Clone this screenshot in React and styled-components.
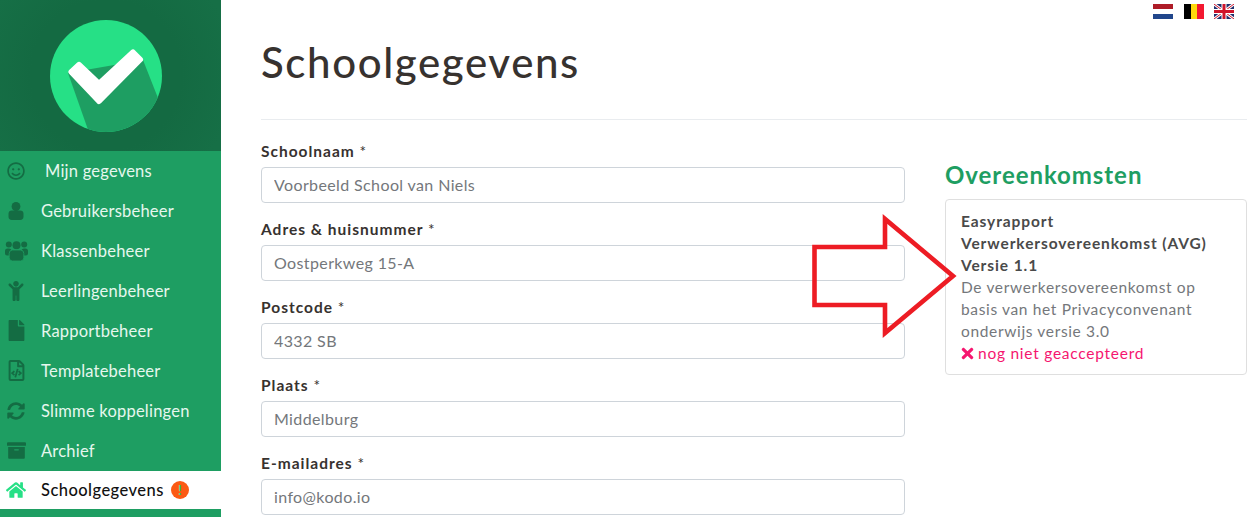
import React from 'react'
import styled, { createGlobalStyle } from 'styled-components'
import { FaRegSmile, FaChild, FaFile, FaRegFileCode, FaSyncAlt, FaArchive, FaHome, FaTimes } from 'react-icons/fa'

const Global = createGlobalStyle`
html, body {
  margin: 0;
  height: 517px;
  overflow: hidden;
  background: #fff;
  font-family: 'Lato', sans-serif;
  color: #37322f;
}
* { box-sizing: border-box; }
`

const Page = styled.div`
display: grid;
grid-template-columns: 221px 1fr;
height: 517px;
overflow: hidden;
`

const Sidebar = styled.nav`
background: #1e9e62;
height: 517px;
`

const LogoZone = styled.div`
height: 151px;
display: flex;
align-items: center;
padding-left: 50px;
background: radial-gradient(circle at 106px 75px, #146a42 0, #146a42 75px, #166f46 130px);
`

const Item = styled.a`
display: flex;
align-items: center;
height: ${p => p.$active ? '38px' : '40px'};
padding-bottom: 1px;
background: ${p => p.$active ? '#fff' : 'transparent'};
color: ${p => p.$active ? '#111' : '#e6f7ee'};
font-size: 16.5px;
letter-spacing: ${p => p.$active ? '0.45px' : '0.22px'};
font-weight: ${p => p.$active ? 500 : 400};
`

const IconBox = styled.span`
width: ${p => p.$wide ? '45px' : '41px'};
flex: none;
display: flex;
align-items: center;
justify-content: center;
padding-right: ${p => p.$wide ? '15px' : '11px'};
margin-left: 1px;
margin-right: -1px;
color: ${p => p.$active ? '#26e086' : '#146c43'};
`

const Badge = styled.span`
width: 18px;
height: 18px;
margin-left: 7px;
border-radius: 50%;
background: #fb5a14;
color: #26e086;
font-size: 13px;
font-weight: 700;
line-height: 18px;
text-align: center;
letter-spacing: 0;
`

const Main = styled.main`
position: relative;
padding: 0 2px 0 40px;
min-width: 0;
`

const Flags = styled.div`
position: absolute;
top: 4px;
right: 15px;
display: flex;
gap: 10px;
`

const Flag = styled.svg`
display: block;
margin-right: ${p => p.$extra || 0}px;
`

const Title = styled.h1`
margin: 0;
height: 120px;
padding-top: 35px;
border-bottom: 1px solid #e9ecef;
font-size: 42px;
line-height: 54px;
font-weight: 500;
letter-spacing: 1.6px;
color: #37322f;
`

const Columns = styled.div`
display: grid;
grid-template-columns: 644px 302px;
column-gap: 40px;
padding-top: 19px;
`

const Field = styled.div`
height: 78px;
`

const Label = styled.label`
display: block;
height: 28px;
line-height: 24px;
font-size: 15.5px;
font-weight: 700;
letter-spacing: 1px;
color: #37322f;
`

const Star = styled.span`
font-weight: 400;
`

const Input = styled.input`
display: block;
width: 100%;
height: 36px;
padding: 0 13px 2px 12px;
border: 1px solid #ced4da;
border-radius: 4px;
background: #fff;
font: inherit;
font-size: 16px;
letter-spacing: 0.38px;
color: #74777b;
outline: none;
`

const Aside = styled.aside`
padding-top: 21px;
`

const Heading = styled.h2`
margin: 0 0 10px;
height: 29px;
line-height: 29px;
font-size: 24px;
font-weight: 700;
letter-spacing: 0.95px;
color: #1e9e62;
`

const Card = styled.div`
height: 176px;
padding: 10px 15px;
border: 1px solid #dfdfdf;
border-radius: 4px;
font-size: 15.5px;
line-height: 22px;
letter-spacing: 0.65px;
color: #74777b;
`

const CardTitle = styled.div`
font-weight: 700;
letter-spacing: 0.9px;
color: #4a4a4a;
`

const Status = styled.div`
display: flex;
align-items: center;
gap: 2px;
letter-spacing: 0.75px;
color: #f5166f;
svg { margin-left: -2px; }
`

const ArrowOverlay = styled.svg`
position: absolute;
left: 0;
top: 0;
pointer-events: none;
`

function Logo() {
  return (
    <svg width="112" height="112" viewBox="50 19 112 112">
      <defs>
        <clipPath id="disc"><circle cx="106" cy="75" r="56" /></clipPath>
      </defs>
      <circle cx="106" cy="75" r="56" fill="#26e086" />
      <polygon clipPath="url(#disc)" points="68,72 143,59 165,115 150,140 92,140" fill="#1e9e62" />
      <polygon points="71.5,71 79,64 99,83 133,51.5 140,58.5 99,100" fill="#fff" stroke="#fff" strokeWidth="6" strokeLinejoin="round" />
    </svg>
  )
}

function UserIcon() {
  return (
    <svg width="16" height="18" viewBox="0 0 16 18" fill="currentColor">
      <ellipse cx="8" cy="4.6" rx="4.4" ry="4.6" />
      <rect x="0.5" y="8.5" width="15" height="9.5" rx="3.4" />
    </svg>
  )
}

function UsersIcon() {
  return (
    <svg width="23" height="21" viewBox="0 0 23 21" fill="currentColor">
      <circle cx="3.8" cy="4.6" r="3" />
      <circle cx="19.2" cy="4.6" r="3" />
      <circle cx="11.5" cy="5.2" r="4" />
      <rect x="0" y="8.5" width="6.5" height="7" rx="2.6" />
      <rect x="16.5" y="8.5" width="6.5" height="7" rx="2.6" />
      <rect x="4.2" y="10" width="14.6" height="11" rx="3.4" stroke="#1e9e62" strokeWidth="0.8" />
    </svg>
  )
}

function FlagNL() {
  return (
    <Flag width="20" height="15" viewBox="0 0 20 15" $extra={1}>
      <rect width="20" height="5" fill="#ae1c28" />
      <rect y="5" width="20" height="5" fill="#fff" />
      <rect y="10" width="20" height="5" fill="#21468b" />
    </Flag>
  )
}

function FlagBE() {
  return (
    <Flag width="20" height="15" viewBox="0 0 20 15">
      <rect width="7" height="15" fill="#000" />
      <rect x="7" width="6" height="15" fill="#ffd90c" />
      <rect x="13" width="7" height="15" fill="#f31830" />
    </Flag>
  )
}

function FlagUK() {
  return (
    <Flag width="20" height="15" viewBox="0 0 20 15">
      <rect width="20" height="15" fill="#1f2f6e" />
      <path d="M0 0L20 15M20 0L0 15" stroke="#fff" strokeWidth="3" />
      <path d="M0 0L20 15M20 0L0 15" stroke="#cf142b" strokeWidth="1" />
      <path d="M10 0V15M0 7.5H20" stroke="#fff" strokeWidth="5" />
      <path d="M10 0V15M0 7.5H20" stroke="#cf142b" strokeWidth="3" />
    </Flag>
  )
}

const menu = [
  { label: 'Mijn gegevens', icon: <FaRegSmile size={18} />, wide: true },
  { label: 'Gebruikersbeheer', icon: <UserIcon /> },
  { label: 'Klassenbeheer', icon: <UsersIcon /> },
  { label: 'Leerlingenbeheer', icon: <FaChild size={20} /> },
  { label: 'Rapportbeheer', icon: <FaFile size={21} /> },
  { label: 'Templatebeheer', icon: <FaRegFileCode size={21} /> },
  { label: 'Slimme koppelingen', icon: <FaSyncAlt size={18} /> },
  { label: 'Archief', icon: <FaArchive size={19} /> },
  { label: 'Schoolgegevens', icon: <FaHome size={20} />, active: true, badge: true },
]

const fields = [
  { label: 'Schoolnaam', value: 'Voorbeeld School van Niels' },
  { label: 'Adres & huisnummer', value: 'Oostperkweg 15-A' },
  { label: 'Postcode', value: '4332 SB' },
  { label: 'Plaats', value: 'Middelburg' },
  { label: 'E-mailadres', value: 'info@kodo.io' },
]

export default function App() {
  return (
    <Page>
      <Global />
      <Sidebar>
        <LogoZone><Logo /></LogoZone>
        {menu.map(m => (
          <Item key={m.label} $active={m.active}>
            <IconBox $wide={m.wide} $active={m.active}>{m.icon}</IconBox>
            {m.label}
            {m.badge && <Badge>!</Badge>}
          </Item>
        ))}
      </Sidebar>
      <Main>
        <Flags>
          <FlagNL />
          <FlagBE />
          <FlagUK />
        </Flags>
        <Title>Schoolgegevens</Title>
        <Columns>
          <div>
            {fields.map(f => (
              <Field key={f.label}>
                <Label>{f.label} <Star>*</Star></Label>
                <Input defaultValue={f.value} readOnly />
              </Field>
            ))}
          </div>
          <Aside>
            <Heading>Overeenkomsten</Heading>
            <Card>
              <CardTitle>Easyrapport</CardTitle>
              <CardTitle>Verwerkersovereenkomst (AVG)</CardTitle>
              <CardTitle>Versie 1.1</CardTitle>
              De verwerkersovereenkomst op basis van het Privacyconvenant onderwijs versie 3.0
              <Status><FaTimes size={17} /> nog niet geaccepteerd</Status>
            </Card>
          </Aside>
        </Columns>
        <ArrowOverlay width="1028" height="517" viewBox="221 0 1028 517">
          <polygon points="814.5,247 885,247 885,219 953,276 885,333 885,305 814.5,305" fill="none" stroke="#ed1c24" strokeWidth="4.6" />
        </ArrowOverlay>
      </Main>
    </Page>
  )
}
